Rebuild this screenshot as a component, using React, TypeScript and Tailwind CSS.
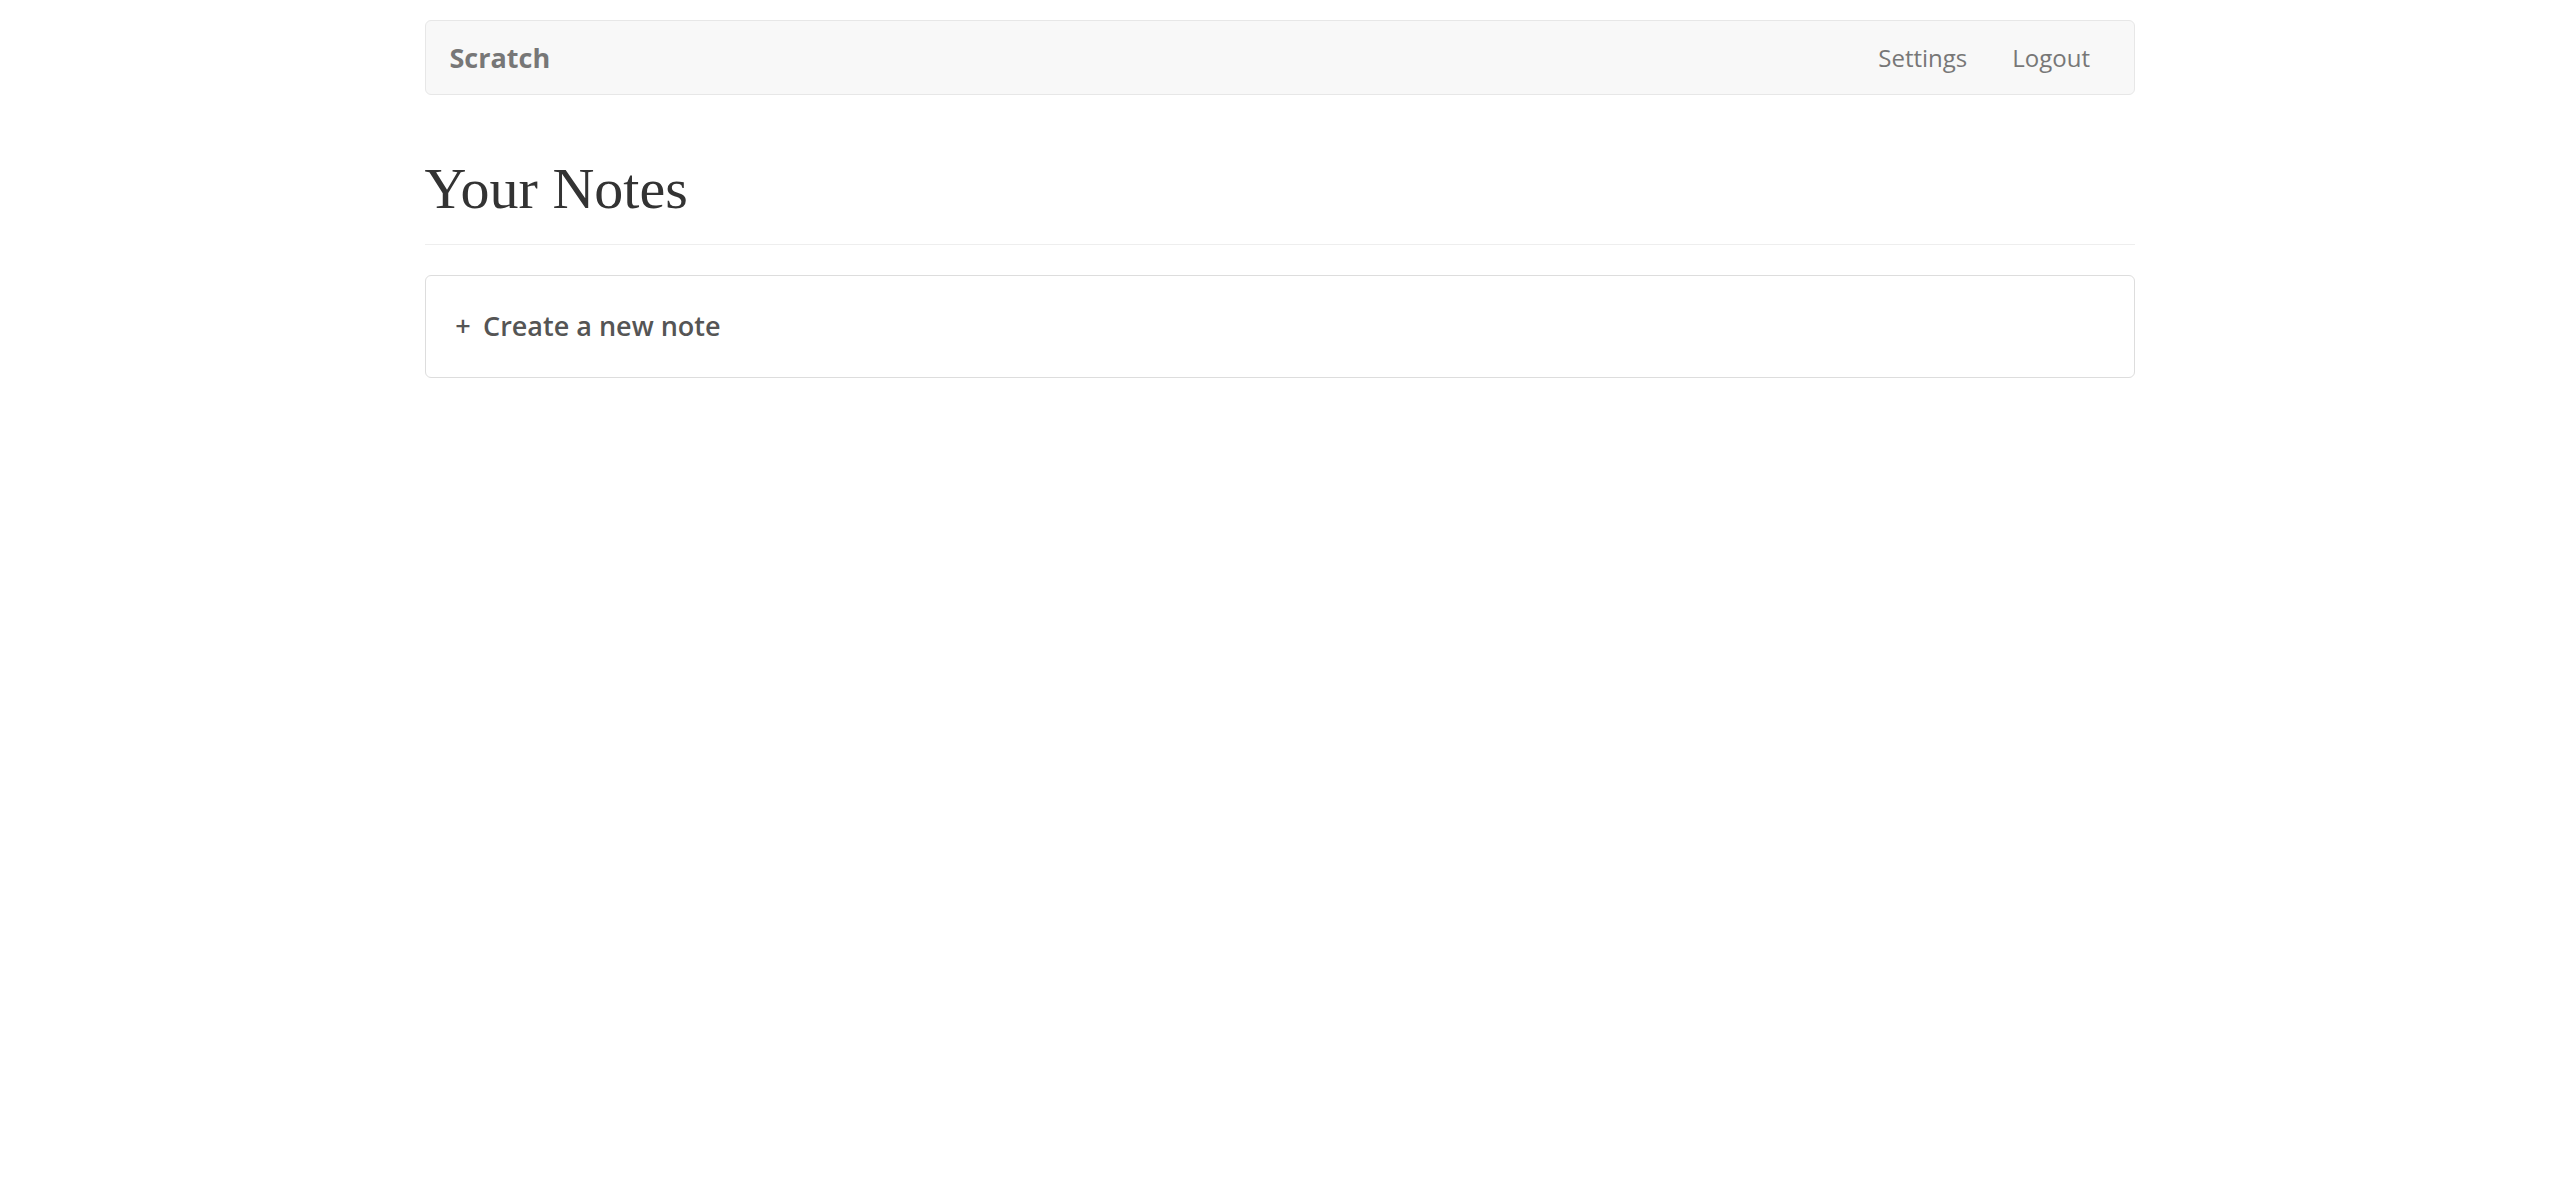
const sans = "font-['Open_Sans','Noto_Sans_CJK_SC',sans-serif]";

const NavBar = () => (
  <nav className="flex h-[75px] items-center justify-between rounded-[6px] border-[1.5px] border-[#e7e7e7] bg-[#f8f8f8]">
    <a href="/" className="px-[24px] text-[27px] font-bold leading-[30px] text-[#777]">
      Scratch
    </a>
    <ul className="flex items-center pr-[21px]">
      <li>
        <a href="/settings" className="block px-[22.5px] text-[24px] leading-[30px] text-[#777]">
          Settings
        </a>
      </li>
      <li>
        <a href="/logout" className="block px-[22.5px] text-[24px] leading-[30px] text-[#777]">
          Logout
        </a>
      </li>
    </ul>
  </nav>
);

const NotesList = () => (
  <div className="mt-[30px] rounded-[6px] border-[1.5px] border-[#ddd] bg-white px-[22.5px] py-[15px]">
    <a href="/notes/new" className="block">
      <h4 className="my-[15px] truncate text-[27px] font-semibold leading-[1.5] text-[#555]">
        <b className="ml-[2px] inline-block w-[26px] text-center font-semibold">+</b> Create a new note
      </h4>
    </a>
  </div>
);

export default function App() {
  return (
    <div className={`min-h-screen bg-white ${sans} text-[24px] text-[#333]`}>
      <div className="mx-auto mt-[20px] w-[1710px]">
        <NavBar />
        <div className="mt-[62px] border-b-[1.5px] border-[#eee] pb-[23.5px]">
          <h1 className="font-['Liberation_Serif',serif] text-[58px] leading-[1.1] text-[#333]">
            Your Notes
          </h1>
        </div>
        <NotesList />
      </div>
    </div>
  );
}
